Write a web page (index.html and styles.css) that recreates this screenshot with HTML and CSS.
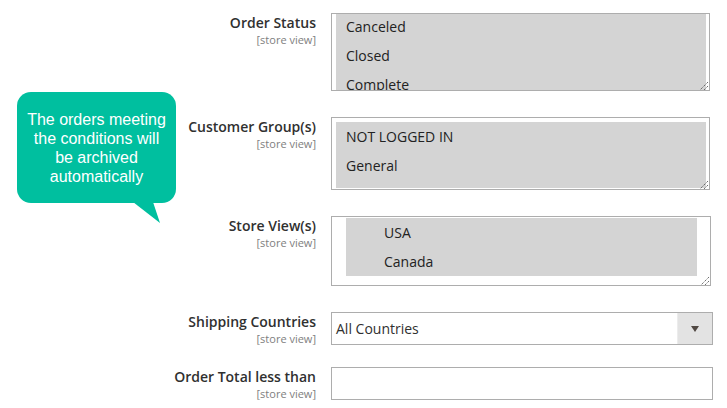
FILE: index.html
```html
<!DOCTYPE html>
<html lang="en">
<head>
<meta charset="utf-8">
<title>Archive conditions</title>
<link rel="stylesheet" href="styles.css">
</head>
<body>
<div class="page">
  <div class="form">
    <div class="field">
      <div class="label"><span class="title">Order Status</span><span class="scope">[store view]</span></div>
      <div class="multi multi-status">
        <div class="opts opts-status">
          <div class="opt">Canceled</div>
          <div class="opt">Closed</div>
          <div class="opt">Complete</div>
        </div>
        <svg class="grip" width="8" height="8" viewBox="0 0 8 8"><path d="M8 0 L0 8 M8 4 L4 8" stroke="#555" stroke-width="1" stroke-dasharray="1.2 1"/></svg>
      </div>
    </div>
    <div class="field">
      <div class="label"><span class="title">Customer Group(s)</span><span class="scope">[store view]</span></div>
      <div class="multi multi-group">
        <div class="opts opts-group">
          <div class="opt">NOT LOGGED IN</div>
          <div class="opt">General</div>
        </div>
        <svg class="grip" width="8" height="8" viewBox="0 0 8 8"><path d="M8 0 L0 8 M8 4 L4 8" stroke="#555" stroke-width="1" stroke-dasharray="1.2 1"/></svg>
      </div>
    </div>
    <div class="field">
      <div class="label"><span class="title">Store View(s)</span><span class="scope">[store view]</span></div>
      <div class="multi multi-store">
        <div class="opts opts-store">
          <div class="opt opt-indent">USA</div>
          <div class="opt opt-indent">Canada</div>
        </div>
        <svg class="grip" width="8" height="8" viewBox="0 0 8 8"><path d="M8 0 L0 8 M8 4 L4 8" stroke="#555" stroke-width="1" stroke-dasharray="1.2 1"/></svg>
      </div>
    </div>
    <div class="field">
      <div class="label"><span class="title">Shipping Countries</span><span class="scope">[store view]</span></div>
      <div class="select">
        <span class="select-value">All Countries</span>
        <span class="select-btn"><span class="arrow"></span></span>
      </div>
    </div>
    <div class="field field-last">
      <div class="label"><span class="title">Order Total less than</span><span class="scope">[store view]</span></div>
      <div class="input"></div>
    </div>
  </div>

  <div class="bubble">
    <p class="bubble-text">The orders meeting<br>the conditions will<br>be archived<br>automatically</p>
    <svg class="tail" width="30" height="22" viewBox="0 0 30 22"><polygon points="0,0 20,0 27,21" fill="#00bf9f"/></svg>
  </div>
</div>
</body>
</html>
```

FILE: styles.css
```css
html, body {
  margin: 0;
  padding: 0;
  background: #ffffff;
}

.page {
  position: relative;
  width: 727px;
  height: 408px;
  overflow: hidden;
  font-family: "Open Sans", "Liberation Sans", sans-serif;
  color: #303030;
}

.form {
  display: flex;
  flex-direction: column;
  gap: 26px;
  padding-top: 13px;
}

.field {
  display: grid;
  grid-template-columns: 316px auto;
  column-gap: 15px;
  align-items: start;
}

.field-last {
  margin-top: -4px;
}

.label {
  display: flex;
  flex-direction: column;
  align-items: flex-end;
}

.title {
  display: block;
  font-size: 14px;
  line-height: 19px;
  font-weight: 600;
  color: #303030;
  white-space: nowrap;
}

.scope {
  display: block;
  font-size: 11px;
  line-height: 13.5px;
  margin-top: 0.5px;
  color: #808080;
  white-space: nowrap;
}

.multi {
  position: relative;
  box-sizing: border-box;
  width: 379px;
  border: 1px solid #adadad;
  background: #ffffff;
  overflow: hidden;
}

.multi-status {
  height: 78px;
  padding: 0 3px 0 4px;
}

.multi-group {
  height: 73px;
  padding: 4px 3px 0 4px;
}

.multi-store {
  width: 380px;
  height: 70px;
  padding: 1px 13px 0 14px;
}

.opts {
  background: #d4d4d4;
}

.opts-status {
  margin-top: -2px;
}

.opts-group {
  padding-bottom: 8px;
}

.opt {
  height: 29px;
  line-height: 29px;
  padding-left: 10px;
  font-size: 14px;
  color: #222222;
  white-space: nowrap;
}

.opt-indent {
  padding-left: 38px;
}

.grip {
  position: absolute;
  right: 1px;
  bottom: 0;
  display: block;
}

.select {
  box-sizing: border-box;
  width: 382px;
  height: 33px;
  border: 1px solid #adadad;
  display: flex;
  align-items: stretch;
  background: #ffffff;
}

.select-value {
  flex: 1;
  display: flex;
  align-items: center;
  padding-left: 4px;
  font-size: 14px;
  color: #303030;
}

.select-btn {
  width: 34px;
  background: #e3e3e3;
  border-left: 1px solid #ececec;
  display: flex;
  align-items: center;
  justify-content: center;
}

.arrow {
  width: 0;
  height: 0;
  border-top: 6px solid #514943;
  border-left: 4.5px solid transparent;
  border-right: 4.5px solid transparent;
}

.input {
  box-sizing: border-box;
  width: 382px;
  height: 33px;
  border: 1px solid #adadad;
  background: #ffffff;
}

.bubble {
  position: absolute;
  left: 17px;
  top: 92px;
  width: 159px;
  height: 111px;
  border-radius: 14px;
  background: #00bf9f;
  display: flex;
  align-items: center;
  justify-content: center;
}

.bubble-text {
  margin: 0;
  font-family: "Liberation Sans", Arial, sans-serif;
  font-size: 16px;
  line-height: 19px;
  color: #ffffff;
  text-align: center;
}

.tail {
  position: absolute;
  left: 116px;
  top: 110px;
  display: block;
}
```
